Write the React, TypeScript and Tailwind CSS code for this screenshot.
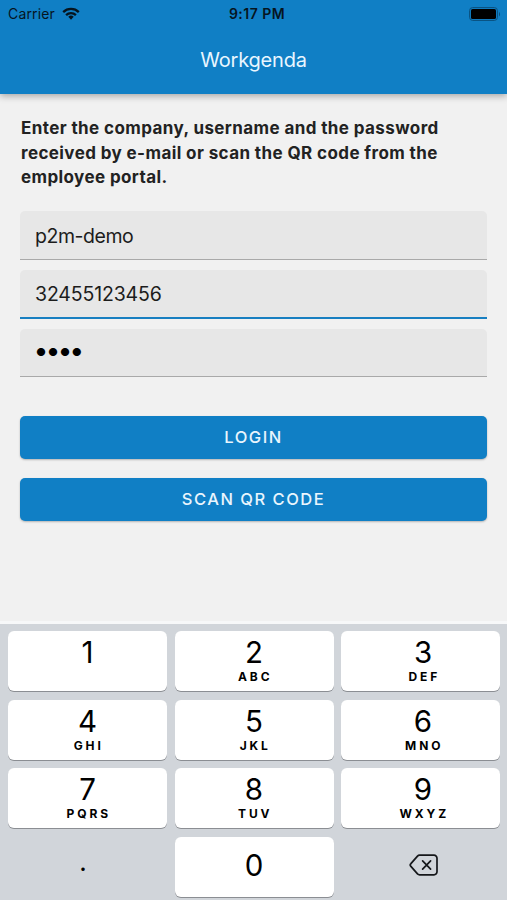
import clsx from "clsx";

interface Key {
  digit: string;
  letters?: string;
}

const keys: Key[] = [
  { digit: "1", letters: "" },
  { digit: "2", letters: "ABC" },
  { digit: "3", letters: "DEF" },
  { digit: "4", letters: "GHI" },
  { digit: "5", letters: "JKL" },
  { digit: "6", letters: "MNO" },
  { digit: "7", letters: "PQRS" },
  { digit: "8", letters: "TUV" },
  { digit: "9", letters: "WXYZ" },
];

function StatusBar() {
  return (
    <div className="grid grid-cols-3 items-center h-[27px] pl-2 pr-[6px] text-[#06151f]">
      <div className="flex items-center gap-[7px] text-[14px] leading-[26px] tracking-[0.15px]">
        <span>Carrier</span>
        <svg className="mb-[1px]" width="18" height="13" viewBox="0 0 18 13" fill="none" stroke="currentColor" strokeWidth="2.3">
          <path d="M1.2 5.1a11.2 11.2 0 0 1 15.6 0" />
          <path d="M4.1 8.1a7 7 0 0 1 9.8 0" />
          <path d="M9 12.7l2.7-2.9a3.9 3.9 0 0 0-5.4 0z" fill="currentColor" stroke="none" />
        </svg>
      </div>
      <div className="pl-[5px] text-center text-[14px] leading-[28px] font-semibold tracking-[0.45px]">9:17 PM</div>
      <svg className="justify-self-end mb-[1px]" width="32" height="14" viewBox="0 0 32 14">
        <rect x="0.6" y="0.6" width="27.8" height="12.8" rx="3" fill="none" stroke="#0a4f7c" strokeWidth="1" />
        <rect x="2" y="2" width="25" height="10" rx="1.6" fill="#000" />
        <path d="M30 5v4.4c1.4-.6 1.4-3.8 0-4.4z" fill="#0a4f7c" />
      </svg>
    </div>
  );
}

function Field({ children, active }: { children: React.ReactNode; active?: boolean }) {
  return (
    <div
      className={clsx(
        "flex items-center h-[48.7px] px-[15px] pt-[2px] rounded-t-[5px] bg-[#e7e7e7] text-[19.5px] text-[#1c1c1c]",
        active ? "border-b-2 border-[#187fc1] tracking-[-0.15px]" : "border-b border-[#a9a9a9] tracking-[-0.45px]"
      )}
    >
      {children}
    </div>
  );
}

function ActionButton({ label }: { label: string }) {
  return (
    <button className="h-[43px] w-full pt-[1px] rounded-[5px] bg-[#107fc5] text-[16.5px] font-medium tracking-[1.5px] text-[#e9f5fd] shadow-[0_1px_2px_rgba(0,0,0,0.25)]">
      {label}
    </button>
  );
}

function KeyButton({ digit, letters }: Key) {
  return (
    <button className="flex flex-col items-center h-[60px] rounded-[6px] bg-white text-black shadow-[0_1px_0_#8b8e93] nth-[3n]:pl-[5px]">
      <span className={clsx("text-[29.5px] leading-[36px]", letters === undefined ? "mt-[10px]" : "mt-[3px]")}>{digit}</span>
      {letters && (
        <span className="mt-[1px] text-[12px] leading-[12px] font-bold tracking-[2.9px] pl-[2.5px]">{letters}</span>
      )}
    </button>
  );
}

export default function App() {
  return (
    <div className="flex flex-col w-full h-[900px] overflow-hidden bg-[#f1f1f1] font-['Inter',sans-serif]">
      <header className="h-[94px] shrink-0 bg-[#107fc5] shadow-[0_2px_7px_rgba(0,0,0,0.32)]">
        <StatusBar />
        <h1 className="text-center text-[20px] leading-[66px] tracking-[-0.2px] text-[#e9f6ff]">Workgenda</h1>
      </header>

      <main className="flex-1 px-5 pt-[22px]">
        <p className="pl-[1px] text-[17px] leading-[24.5px] font-bold tracking-[0.4px] text-[#222] whitespace-nowrap">
          Enter the company, username and the password
          <br />
          received by e-mail or scan the QR code from the
          <br />
          employee portal.
        </p>

        <div className="flex flex-col gap-[10px] mt-[21.8px]">
          <Field>p2m-demo</Field>
          <Field active>32455123456</Field>
          <Field>
            <span className="pb-[2px] pl-[1px] text-[11px] tracking-[1.9px] text-black">●●●●</span>
          </Field>
        </div>

        <div className="flex flex-col gap-[19px] mt-[38.5px]">
          <ActionButton label="LOGIN" />
          <ActionButton label="SCAN QR CODE" />
        </div>
      </main>

      {/* Numeric keypad */}
      <section className="h-[279px] shrink-0 border-t-[3px] border-[#f7f8f9] bg-[#d1d5da] pt-[7px] px-2 pr-[7px]">
        <div className="grid grid-cols-3 gap-x-[7.5px] gap-y-[8.5px]">
          {keys.map((key) => (
            <KeyButton key={key.digit} {...key} />
          ))}
          <button className="h-[60px] pr-[9px] text-[26px] leading-[50px] pb-[10px] text-black">.</button>
          <KeyButton digit="0" />
          <button className="flex items-center justify-center h-[60px] pl-[6px] pb-[4px] text-[#15171a]">
            <svg width="30" height="22" viewBox="0 0 30 22" fill="none" stroke="currentColor" strokeWidth="1.7" strokeLinejoin="round">
              <path d="M10.6 1.2H25a3 3 0 0 1 3 3v13.6a3 3 0 0 1-3 3H10.6a3 3 0 0 1-2.1-.9L1.9 12.4a2 2 0 0 1 0-2.8L8.5 2.1a3 3 0 0 1 2.1-.9z" />
              <path d="M13.6 6.8l8 8.4m0-8.4l-8 8.4" strokeLinecap="round" />
            </svg>
          </button>
        </div>
      </section>
    </div>
  );
}
